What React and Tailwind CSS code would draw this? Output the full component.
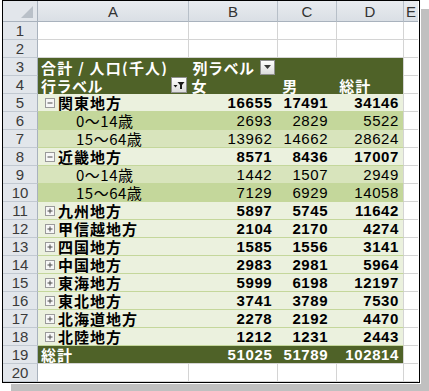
import React from 'react';

const JP = { fontFamily: '"Noto Sans CJK JP", "Liberation Sans", sans-serif' };
const NUM = { fontFamily: '"Liberation Sans", "Noto Sans CJK JP", sans-serif' };

const data = [
  { n: 5, kind: 'group', open: true, label: '関東地方', v: [16655, 17491, 34146] },
  { n: 6, kind: 'sub', bg: 'bg-[#c4d79b]', label: '0～14歳', v: [2693, 2829, 5522] },
  { n: 7, kind: 'sub', bg: 'bg-[#d8e4bc]', label: '15～64歳', v: [13962, 14662, 28624] },
  { n: 8, kind: 'group', open: true, label: '近畿地方', v: [8571, 8436, 17007] },
  { n: 9, kind: 'sub', bg: 'bg-[#d8e4bc]', label: '0～14歳', v: [1442, 1507, 2949] },
  { n: 10, kind: 'sub', bg: 'bg-[#c4d79b]', label: '15～64歳', v: [7129, 6929, 14058] },
  { n: 11, kind: 'group', label: '九州地方', v: [5897, 5745, 11642] },
  { n: 12, kind: 'group', label: '甲信越地方', v: [2104, 2170, 4274] },
  { n: 13, kind: 'group', label: '四国地方', v: [1585, 1556, 3141] },
  { n: 14, kind: 'group', label: '中国地方', v: [2983, 2981, 5964] },
  { n: 15, kind: 'group', label: '東海地方', v: [5999, 6198, 12197] },
  { n: 16, kind: 'group', label: '東北地方', v: [3741, 3789, 7530] },
  { n: 17, kind: 'group', label: '北海道地方', v: [2278, 2192, 4470] },
  { n: 18, kind: 'group', label: '北陸地方', v: [1212, 1231, 2443] },
];

function RowHead({ n }) {
  return (
    <div
      className="w-[35px] h-full shrink-0 flex items-center justify-center bg-[#e2e6eb] border-r border-[#a9b2bd] border-b border-b-[#c2c9d1] text-[15px] text-[#3a3a3a] leading-none"
      style={NUM}
    >
      {n}
    </div>
  );
}

function ECell() {
  return <div className="w-[14px] h-full border-b border-[#d4d4d4]" />;
}

function Toggle({ open }) {
  return (
    <svg width="10" height="10" viewBox="0 0 10 10" className="shrink-0">
      <rect x="0.5" y="0.5" width="9" height="9" fill="#f7f7f7" stroke="#9a9a9a" />
      <path d="M2.5 5h5" stroke="#4a4a4a" strokeWidth="1" />
      {!open && <path d="M5 2.5v5" stroke="#4a4a4a" strokeWidth="1" />}
    </svg>
  );
}

function BlankRow({ n }) {
  return (
    <div className="flex h-[18px]">
      <RowHead n={n} />
      <div className="w-[151px] h-full border-r border-b border-[#d4d4d4]" />
      <div className="w-[89px] h-full border-r border-b border-[#d4d4d4]" />
      <div className="w-[59px] h-full border-r border-b border-[#d4d4d4]" />
      <div className="w-[67px] h-full border-r border-b border-[#d4d4d4]" />
      <ECell />
    </div>
  );
}

function Values({ v, bold, white }) {
  const cls = `${bold ? 'font-bold' : ''} ${white ? 'text-white' : 'text-black'} text-[15px] tracking-[0.6px] leading-none flex items-center justify-end h-full`;
  return (
    <>
      <div className={`w-[89px] pr-[5px] ${cls}`} style={NUM}>{v[0]}</div>
      <div className={`w-[59px] pr-[8px] ${cls}`} style={NUM}>{v[1]}</div>
      <div className={`w-[67px] pr-[4px] ${cls}`} style={NUM}>{v[2]}</div>
    </>
  );
}

function DataRow({ r }) {
  const group = r.kind === 'group';
  return (
    <div className="flex h-[18px]">
      <RowHead n={r.n} />
      <div
        className={`flex w-[366px] h-full border-b border-[#c4d79b] border-r border-r-[#d4d4d4] ${group ? 'bg-[#ebf1de]' : r.bg}`}
      >
        <div className="w-[151px] h-full flex items-center leading-none">
          {group ? (
            <div className="flex items-center pl-[7px] gap-[3px]">
              <Toggle open={r.open} />
              <span className="text-[15px] font-bold tracking-[1px] text-black" style={JP}>
                {r.label}
              </span>
            </div>
          ) : (
            <span className="pl-[38px] text-[15px] tracking-[0.5px] text-black" style={JP}>
              {r.label}
            </span>
          )}
        </div>
        <Values v={r.v} bold={group} />
      </div>
      <ECell />
    </div>
  );
}

function FilterButton() {
  return (
    <div className="w-[16px] h-[16px] border border-[#8f8f8f] bg-gradient-to-b from-[#ffffff] to-[#dcdcdc] flex items-center justify-center">
      <svg width="12" height="10" viewBox="0 0 12 10">
        <path d="M0.5 5h4l-2 2.5z" fill="#1a1a1a" />
        <path d="M4.5 2h7l-2.5 3v4h-2v-4z" fill="#1a1a1a" />
      </svg>
    </div>
  );
}

function DropButton() {
  return (
    <div className="w-[15px] h-[15px] border border-[#8f8f8f] bg-gradient-to-b from-[#ffffff] to-[#dcdcdc] flex items-center justify-center">
      <svg width="7" height="4" viewBox="0 0 7 4">
        <path d="M0 0h7l-3.5 4z" fill="#3a3a3a" />
      </svg>
    </div>
  );
}

export default function App() {
  return (
    <div className="w-[429px] h-[391px] bg-white relative overflow-hidden">
      <div className="ml-[2px] w-[418px] h-[383px] border border-black bg-white shadow-[0_0_0_1px_#ffffff,9px_9px_0_0_#c0c0c0] overflow-hidden">
        {/* column header */}
        <div className="flex h-[21px]">
          <div className="w-[35px] h-full relative bg-[#e2e6eb] border-r border-b border-[#a9b2bd]">
            <svg width="12" height="12" viewBox="0 0 12 12" className="absolute right-[4px] bottom-[3px]">
              <path d="M12 0v12h-12z" fill="#b9c0c8" />
            </svg>
          </div>
          {[
            ['A', 'w-[151px]'],
            ['B', 'w-[89px]'],
            ['C', 'w-[59px]'],
            ['D', 'w-[67px]'],
          ].map(([l, w]) => (
            <div
              key={l}
              className={`${w} h-full flex items-center justify-center bg-gradient-to-b from-[#e9ecf0] to-[#dadfe5] border-r border-r-[#b7bfc8] border-b border-b-[#a9b2bd] text-[15px] text-[#333] leading-none`}
              style={NUM}
            >
              {l}
            </div>
          ))}
          <div
            className="w-[14px] h-full flex items-center justify-center bg-gradient-to-b from-[#e9ecf0] to-[#dadfe5] border-b border-[#a9b2bd] text-[15px] text-[#333] leading-none"
            style={NUM}
          >
            E
          </div>
        </div>

        <BlankRow n={1} />
        <BlankRow n={2} />

        {/* row 3 */}
        <div className="flex h-[18px]">
          <RowHead n={3} />
          <div className="flex w-[366px] h-full bg-[#4f6228] border-r border-[#d4d4d4] text-white">
            <div className="w-[151px] h-full flex items-center pl-[3px]">
              <span className="text-[15px] font-bold tracking-[1.2px] leading-none whitespace-pre" style={JP}>
                合計 / 人口(千人)
              </span>
            </div>
            <div className="w-[215px] h-full flex items-center pl-[4px] gap-[5px]">
              <span className="text-[15px] font-bold tracking-[0.5px] leading-none" style={JP}>列ラベル</span>
              <DropButton />
            </div>
          </div>
          <ECell />
        </div>

        {/* row 4 */}
        <div className="flex h-[18px]">
          <RowHead n={4} />
          <div className="flex w-[366px] h-full bg-[#4f6228] border-r border-[#d4d4d4] text-white">
            <div className="w-[151px] h-full flex items-center justify-between pl-[3px] pr-[2px]">
              <span className="text-[15px] font-bold tracking-[0.5px] leading-none" style={JP}>行ラベル</span>
              <FilterButton />
            </div>
            <div className="w-[89px] h-full flex items-center pl-[3px]">
              <span className="text-[15px] font-bold leading-none" style={JP}>女</span>
            </div>
            <div className="w-[59px] h-full flex items-center pl-[5px]">
              <span className="text-[15px] font-bold leading-none" style={JP}>男</span>
            </div>
            <div className="w-[67px] h-full flex items-center pl-[3px]">
              <span className="text-[15px] font-bold tracking-[1px] leading-none" style={JP}>総計</span>
            </div>
          </div>
          <ECell />
        </div>

        {data.map((r) => (
          <DataRow key={r.n} r={r} />
        ))}

        {/* total row */}
        <div className="flex h-[18px]">
          <RowHead n={19} />
          <div className="flex w-[366px] h-full bg-[#4f6228] border-r border-b border-[#d4d4d4] text-white">
            <div className="w-[151px] h-full flex items-center pl-[3px]">
              <span className="text-[15px] font-bold tracking-[1px] leading-none" style={JP}>総計</span>
            </div>
            <Values v={[51025, 51789, 102814]} bold white />
          </div>
          <ECell />
        </div>

        <BlankRow n={20} />
      </div>
    </div>
  );
}
